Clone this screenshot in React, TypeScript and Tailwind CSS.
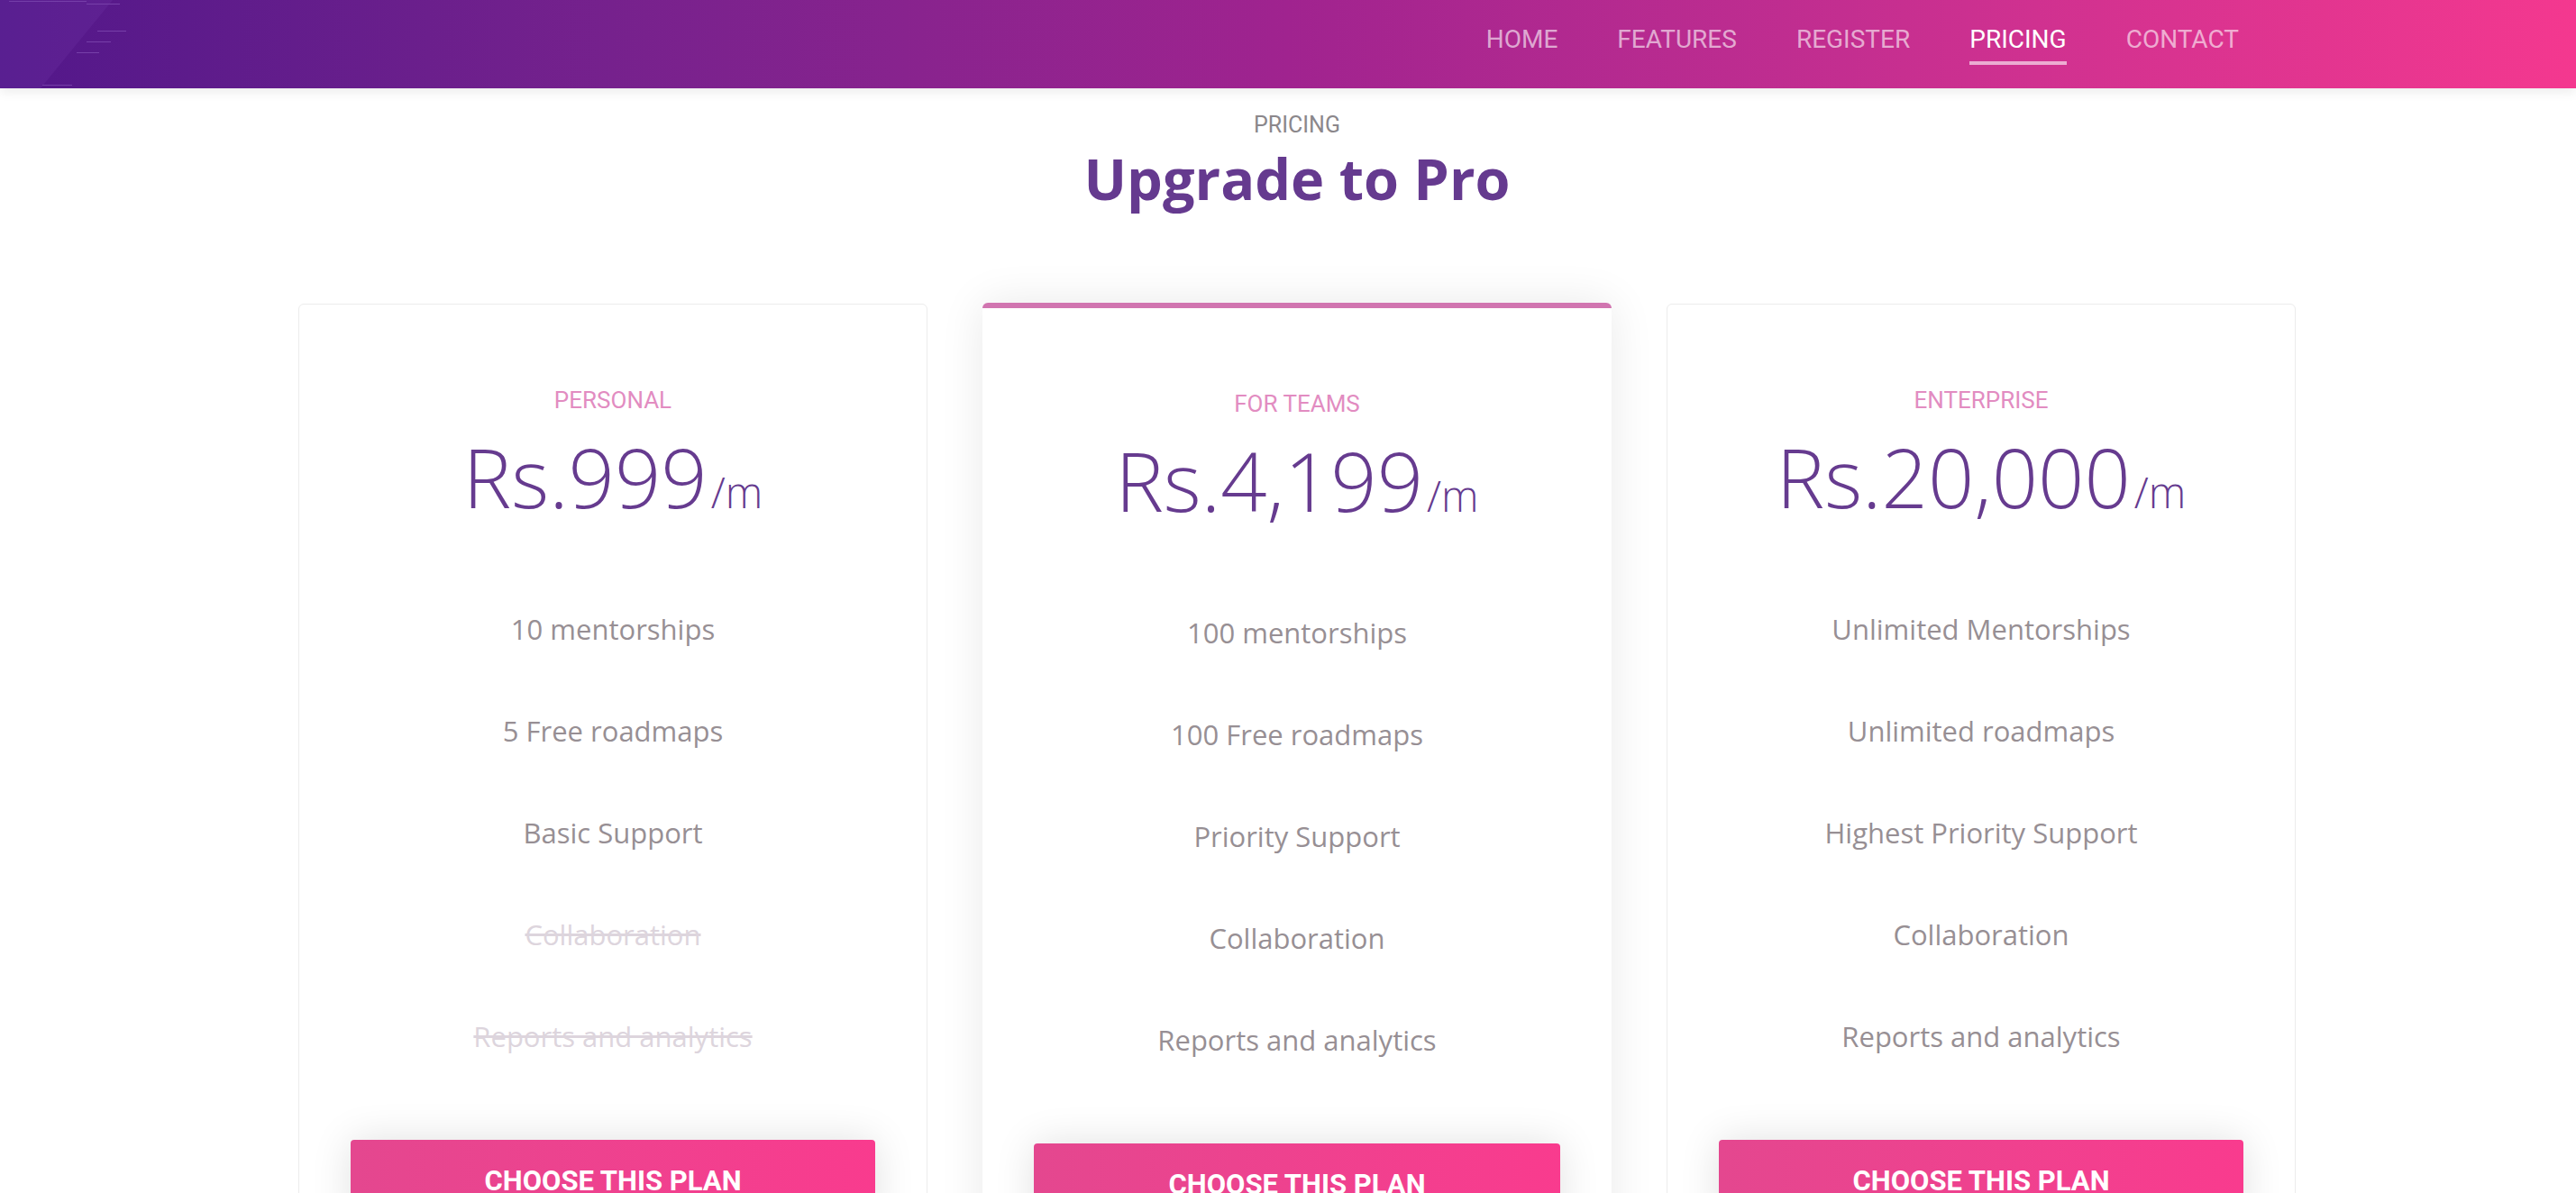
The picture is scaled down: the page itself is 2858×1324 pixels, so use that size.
import React from 'react';

interface Plan {
  name: string;
  price: string;
  features: { label: string; included: boolean }[];
  featured?: boolean;
}

const plans: Plan[] = [
  {
    name: 'PERSONAL',
    price: 'Rs.999',
    features: [
      { label: '10 mentorships', included: true },
      { label: '5 Free roadmaps', included: true },
      { label: 'Basic Support', included: true },
      { label: 'Collaboration', included: false },
      { label: 'Reports and analytics', included: false },
    ],
  },
  {
    name: 'FOR TEAMS',
    price: 'Rs.4,199',
    featured: true,
    features: [
      { label: '100 mentorships', included: true },
      { label: '100 Free roadmaps', included: true },
      { label: 'Priority Support', included: true },
      { label: 'Collaboration', included: true },
      { label: 'Reports and analytics', included: true },
    ],
  },
  {
    name: 'ENTERPRISE',
    price: 'Rs.20,000',
    features: [
      { label: 'Unlimited Mentorships', included: true },
      { label: 'Unlimited roadmaps', included: true },
      { label: 'Highest Priority Support', included: true },
      { label: 'Collaboration', included: true },
      { label: 'Reports and analytics', included: true },
    ],
  },
];

const navLinks = ['HOME', 'FEATURES', 'REGISTER', 'PRICING', 'CONTACT'];

function NavPattern() {
  // faint streaks on the left of the header
  return (
    <svg className="absolute left-0 top-0 h-[98px] w-[160px] opacity-40" viewBox="0 0 160 98">
      <polygon points="0,0 125,0 45,98 0,98" fill="#8a4fc0" opacity="0.35" />
      <g stroke="#a679d6" strokeWidth="1">
        <line x1="10" y1="1.5" x2="96" y2="1.5" />
        <line x1="96" y1="4.5" x2="133" y2="4.5" />
        <line x1="108" y1="34.5" x2="140" y2="34.5" />
        <line x1="96" y1="46.5" x2="123" y2="46.5" />
        <line x1="85" y1="58.5" x2="110" y2="58.5" />
        <line x1="47" y1="94.5" x2="80" y2="94.5" />
      </g>
    </svg>
  );
}

function PlanCard({ plan }: { plan: Plan }) {
  return (
    <div
      className={`w-[698px] bg-white rounded-md flex flex-col items-center pt-[91px] pb-[60px] px-[57px] ${
        plan.featured
          ? 'border-t-[6px] border-[#d175b0] shadow-[0_0_50px_rgba(0,0,0,0.09)] -mt-px'
          : 'border border-[#ececec]'
      }`}
    >
      <div className="font-['Roboto'] text-[26px] leading-[30px] text-[#e28cc1]">{plan.name}</div>
      <div className="mt-[25px] font-['Open_Sans'] font-light text-[90px] leading-none text-[#663b8f] whitespace-nowrap">
        {plan.price}
        <span className="ml-1 text-[47px]">/m</span>
      </div>
      <ul className="mt-[68px] w-full">
        {plan.features.map((f) => (
          <li
            key={f.label}
            className={`h-[113px] leading-[113px] text-center font-['Open_Sans'] text-[31px] ${
              f.included ? 'text-[#978f94]' : 'text-[#ddd5dd] line-through'
            }`}
          >
            {f.label}
          </li>
        ))}
      </ul>
      <button className="mt-[58px] w-full h-[92px] rounded bg-gradient-to-r from-[#e4478f] to-[#f93b8e] text-white font-['Roboto'] font-bold text-[31px] shadow-[0_0_45px_rgba(0,0,0,0.12)]">
        CHOOSE THIS PLAN
      </button>
    </div>
  );
}

export default function App() {
  return (
    <div className="h-screen overflow-hidden bg-white">
      {/* Header */}
      <header className="relative z-10 h-[98px] bg-gradient-to-r from-[#52178a] via-[#a0238f] to-[#f4388f] shadow-[0_4px_12px_rgba(0,0,0,0.08)]">
        <NavPattern />
        <nav className="relative flex justify-end gap-[66px] pr-[374px] pt-[30px]">
          {navLinks.map((link) => (
            <div key={link} className="flex flex-col">
              <span
                className={`font-['Roboto'] text-[28px] leading-[28px] ${
                  link === 'PRICING' ? 'text-white' : 'text-white/60'
                }`}
              >
                {link}
              </span>
              {link === 'PRICING' && <span className="mt-[10px] h-[4px] bg-white/60" />}
            </div>
          ))}
        </nav>
      </header>

      {/* Pricing */}
      <section className="pl-[20px] pt-[26px]">
        <div className="text-center font-['Roboto'] text-[25px] leading-[30px] text-[#8b878b]">PRICING</div>
        <h1 className="mt-[12px] text-center font-['Open_Sans'] font-bold text-[63px] leading-none text-[#653a8f]">
          Upgrade to Pro
        </h1>
        <div className="mt-[108px] flex justify-center items-start gap-[61px]">
          {plans.map((plan) => (
            <PlanCard key={plan.name} plan={plan} />
          ))}
        </div>
      </section>
    </div>
  );
}
